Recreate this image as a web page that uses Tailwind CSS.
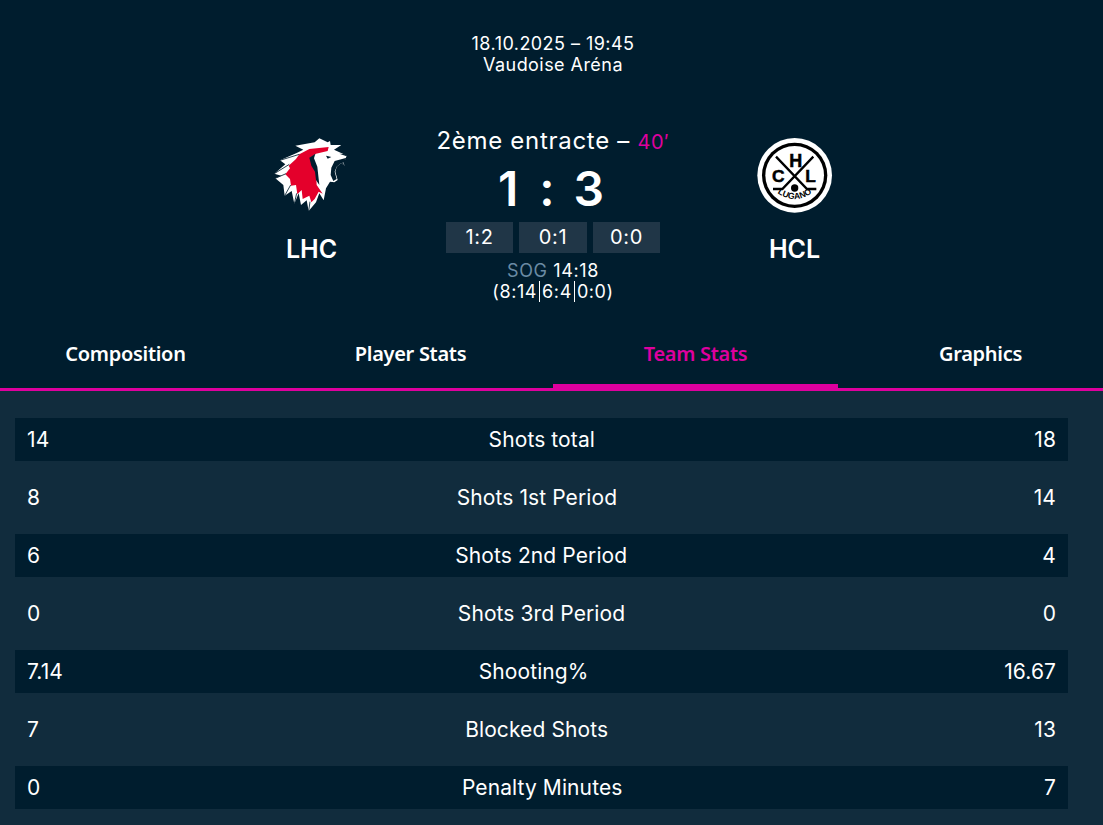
<!DOCTYPE html>
<html>
<head>
<meta charset="utf-8">
<script src="https://cdn.jsdelivr.net/npm/@tailwindcss/browser@4"></script>
</head>
<body class="bg-[#112c3d] font-['Inter',sans-serif] text-white overflow-hidden">
<div class="w-[1103px] h-[825px] overflow-hidden">
  <header class="bg-[#001d2e] h-[391px]">
    <div class="pt-[33px] pl-[3px] text-center text-[18px] leading-[21px] tracking-[0.45px]">
      <div>18.10.2025 – 19:45</div>
      <div>Vaudoise Aréna</div>
    </div>
    <div class="flex justify-center mt-[50px] ml-[3px]">
      <div class="w-[200px] flex flex-col items-center pt-[3px]">
        <svg class="w-[100px] h-[100px] -mt-[3px]" viewBox="8 0 300 300">
          <path fill="#fff" d="M180,40 L205,52 L212,48 L214,60 L246,60 L224,74 L252,87 L262,92 L258,103 L250,108 L256,122 L246,114 L232,125 L228,140 L235,165 L225,172 L212,170 L200,190 L193,226 L180,205 L170,232 L148,258 L142,226 L125,240 L118,205 L105,236 L97,198 L76,212 L72,180 L48,160 L66,152 L45,146 L78,118 L62,106 L112,84 L132,74 L108,62 L166,52 Z"/>
          <path fill="#e4002b" d="M150,72 L208,66 L205,78 L170,86 L152,98 L158,120 L170,142 L172,180 L190,206 L178,200 L166,222 L156,232 L150,212 L130,222 L127,195 L114,208 L110,180 L95,182 L92,162 L78,148 L92,130 L88,122 L110,102 L120,88 Z"/>
          <path fill="#001d2e" d="M150,98 L168,86 L164,100 L174,125 L180,180 L170,165 L167,140 L156,122 Z"/>
          <path fill="#001d2e" d="M216,128 L226,108 L262,98 L250,112 L256,122 L246,114 L232,125 L226,140 L232,162 L222,168 L214,150 Z"/>
          <path fill="#001d2e" d="M200,92 L216,96 L205,101 Z M240,86 L262,88 L262,94 Z"/>
          <path stroke="#001d2e" stroke-width="2.5" fill="none" d="M62,106 L120,88 M45,146 L90,118 M48,160 L80,146 M76,212 L94,180 M105,236 L112,205 M148,258 L152,230"/>
        </svg>
        <div class="mt-[6px] text-[25px] font-semibold leading-[36px]">LHC</div>
      </div>
      <div class="w-[283px] flex flex-col items-center">
        <div class="text-[24px] leading-[32px] tracking-[0.7px]">2ème entracte – <span class="text-[#de009e] text-[20px]">40′</span></div>
        <div class="mt-[7px] text-[48px] font-semibold leading-[48px] flex pr-[4px]"><span class="mr-[21px]">1</span><span class="mr-[19px]">:</span><span>3</span></div>
        <div class="mt-[9px] flex gap-[6px] text-[20px] leading-[31px] tracking-[0.6px] text-center">
          <div class="w-[67px] bg-[#203647]">1:2</div>
          <div class="w-[68px] bg-[#203647]">0:1</div>
          <div class="w-[67px] bg-[#203647]">0:0</div>
        </div>
        <div class="mt-[7px] text-[18px] leading-[21px] tracking-[0.6px] text-center">
          <div><span class="text-[#6b8ba4]">SOG</span> 14:18</div>
          <div class="flex items-stretch justify-center">(8:14<span class="border-l border-white mx-[2px]"></span>6:4<span class="border-l border-white mx-[2px]"></span>0:0)</div>
        </div>
      </div>
      <div class="w-[200px] flex flex-col items-center pt-[3px]">
        <svg class="w-[100px] h-[100px] -mt-[3px]" viewBox="0 0 300 300">
          <circle cx="149" cy="151" r="112" fill="#fff"/>
          <circle cx="149" cy="151" r="98" fill="#000"/>
          <circle cx="149" cy="151" r="88" fill="#fff"/>
          <path stroke="#000" stroke-width="7" fill="none" d="M205,95 L112,192 L84,192 M93,95 L186,192 L214,192"/>
          <circle cx="149" cy="189" r="11" fill="#000"/>
          <text x="152" y="125" text-anchor="middle" font-family="Liberation Sans" font-weight="700" font-size="54" fill="#000" stroke="#000" stroke-width="1.5">H</text>
          <text x="100" y="171" text-anchor="middle" font-family="Liberation Sans" font-weight="700" font-size="52" fill="#000" stroke="#000" stroke-width="1.5">C</text>
          <text x="197" y="171" text-anchor="middle" font-family="Liberation Sans" font-weight="700" font-size="52" fill="#000" stroke="#000" stroke-width="1.5">L</text>
          <path id="lug" fill="none" d="M92,200 Q149,244 206,200"/>
          <text font-family="Liberation Sans" font-weight="700" font-size="26" fill="#000" text-anchor="middle"><textPath href="#lug" startOffset="50%">LUGANO</textPath></text>
        </svg>
        <div class="mt-[6px] text-[25px] font-semibold leading-[36px]">HCL</div>
      </div>
    </div>
  </header>
  <nav class="bg-[#001d2e] relative -mt-[66px] h-[66px] border-b-[3px] border-[#de009e] flex -ml-[17px] w-[1140px] font-['Noto_Sans',sans-serif] text-[20px] font-semibold tracking-[-0.3px]">
    <div class="w-[285px] text-center pt-[14px]">Composition</div>
    <div class="w-[285px] text-center pt-[14px]">Player Stats</div>
    <div class="w-[285px] text-center pt-[14px] text-[#de009e] border-b-[4px] border-[#de009e] h-[63px]">Team Stats</div>
    <div class="w-[285px] text-center pt-[14px]">Graphics</div>
  </nav>
  <section class="pl-[15px] pr-[35px] pt-[27px] text-[21px] leading-[44px] tracking-[0.1px]">
    <div class="h-[43px] mb-[15px] px-3 flex justify-between bg-[#001d2e]"><span>14</span><span>Shots total</span><span>18</span></div>
    <div class="h-[43px] mb-[15px] px-3 flex justify-between"><span>8</span><span>Shots 1st Period</span><span>14</span></div>
    <div class="h-[43px] mb-[15px] px-3 flex justify-between bg-[#001d2e]"><span>6</span><span>Shots 2nd Period</span><span>4</span></div>
    <div class="h-[43px] mb-[15px] px-3 flex justify-between"><span>0</span><span>Shots 3rd Period</span><span>0</span></div>
    <div class="h-[43px] mb-[15px] px-3 flex justify-between bg-[#001d2e]"><span>7.14</span><span>Shooting%</span><span>16.67</span></div>
    <div class="h-[43px] mb-[15px] px-3 flex justify-between"><span>7</span><span>Blocked Shots</span><span>13</span></div>
    <div class="h-[43px] mb-[15px] px-3 flex justify-between bg-[#001d2e]"><span>0</span><span>Penalty Minutes</span><span>7</span></div>
  </section>
</div>
</body>
</html>
